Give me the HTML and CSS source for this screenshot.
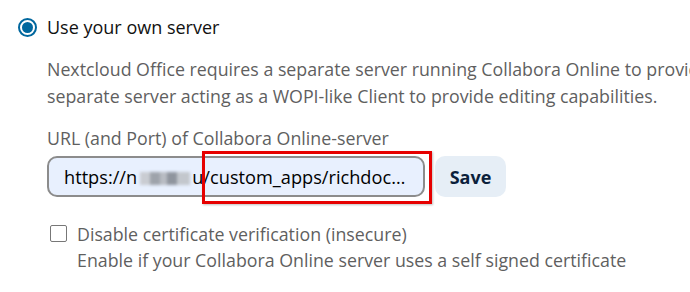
FILE: index.html
```html
<!DOCTYPE html>
<html lang="en">

<head>
    <meta charset="UTF-8">
    <title>Collabora settings</title>
    <link rel="stylesheet" href="styles.css">
</head>

<body>
    <div class="settings">
        <label class="radio-row">
            <span class="radio"><span class="radio-dot"></span></span>
            <span class="radio-label">Use your own server</span>
        </label>

        <div class="option-body">
            <p class="description"><span class="clip-line">Nextcloud Office requires a separate server running Collabora Online to provide</span><br>separate server acting as a WOPI-like Client to provide editing capabilities.</p>

            <div class="field-label">URL (and Port) of Collabora Online-server</div>
            <div class="url-row">
                <div class="url-input">
                    <span>https://n</span><span class="blurred"></span><span>u/custom_apps/richdoc…</span>
                </div>
                <button class="save-button">Save</button>
                <div class="highlight"></div>
            </div>

            <div class="check-row">
                <span class="checkbox"></span>
                <div class="check-text">
                    <div class="check-label">Disable certificate verification (insecure)</div>
                    <div class="check-hint">Enable if your Collabora Online server uses a self signed certificate</div>
                </div>
            </div>
        </div>
    </div>
</body>

</html>
```

FILE: styles.css
```css
body {
    font-family: "Open Sans", "Noto Sans", sans-serif;
    background-color: #fff;
    margin: 0;
    padding: 0;
    overflow: hidden;
}

.settings {
    padding: 15px 0 0 18px;
    white-space: nowrap;
}

.radio-row {
    display: flex;
    align-items: center;
    gap: 10px;
}

.radio {
    width: 15px;
    height: 15px;
    border: 2px solid #00679e;
    border-radius: 50%;
    display: flex;
    align-items: center;
    justify-content: center;
}

.radio-dot {
    width: 11px;
    height: 11px;
    border-radius: 50%;
    background-color: #00679e;
}

.radio-label {
    font-size: 18px;
    color: #111;
}

.option-body {
    padding-left: 29px;
}

.description {
    margin: 17px 0 0;
    font-size: 17.8px;
    line-height: 27px;
    color: #5f5f5f;
}

.clip-line {
    display: inline-block;
    width: 643px;
    overflow: hidden;
    vertical-align: top;
}

.field-label {
    margin-top: 16px;
    font-size: 17.8px;
    color: #5f5f5f;
}

.url-row {
    position: relative;
    display: flex;
    align-items: center;
    gap: 10px;
    margin-top: 6px;
}

.url-input {
    width: 378px;
    height: 41px;
    box-sizing: border-box;
    border: 2px solid #8c8c8c;
    border-radius: 10px;
    background-color: #e8f0fe;
    font-size: 18.2px;
    color: #000;
    display: flex;
    align-items: center;
    padding-left: 15px;
}

.blurred {
    display: inline-block;
    width: 50px;
    height: 13px;
    margin: 3px 2px 0 3px;
    background: linear-gradient(90deg, #c9ccd2 0 20%, #9ea3ab 20% 40%, #b8bcc3 40% 55%, #8f959e 55% 75%, #c3c7cd 75% 100%);
    filter: blur(1.5px);
}

.save-button {
    width: 71px;
    height: 41px;
    border: none;
    border-radius: 10px;
    background-color: #e6eef6;
    color: #0b1f3b;
    font-family: inherit;
    font-size: 18px;
    font-weight: bold;
}

.highlight {
    position: absolute;
    left: 155px;
    top: -5px;
    width: 224px;
    height: 47px;
    border: 3px solid #e60000;
    box-shadow: 1px 1px 2px rgba(0, 0, 0, 0.25);
}

.check-row {
    display: flex;
    gap: 10px;
    margin-top: 24px;
    padding-left: 3px;
}

.checkbox {
    width: 15px;
    height: 15px;
    border: 1.5px solid #777;
    border-radius: 2px;
    margin-top: 4px;
    flex-shrink: 0;
}

.check-text {
    font-size: 17.8px;
    line-height: 26px;
    color: #5f5f5f;
}
```
